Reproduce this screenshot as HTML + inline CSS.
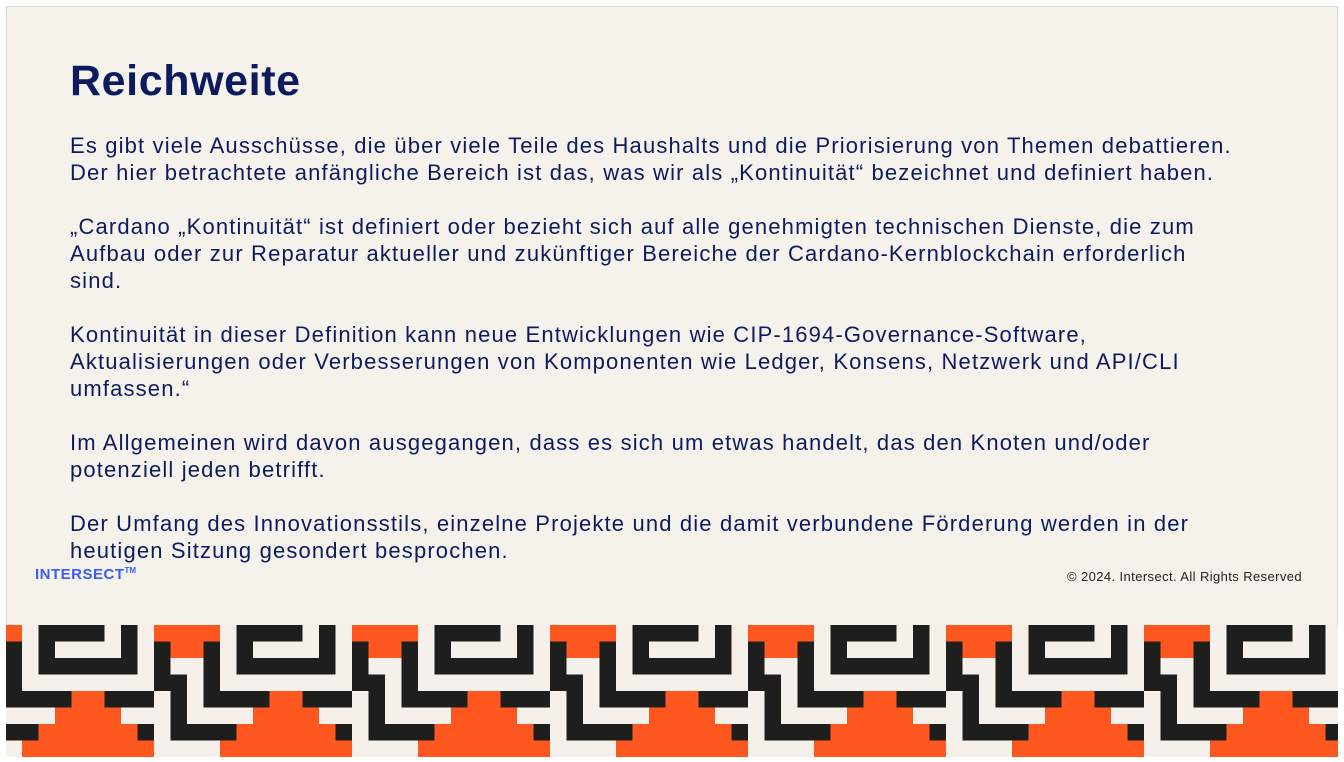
<!DOCTYPE html>
<html><head><meta charset="utf-8"><style>
body{margin:0;width:1344px;height:762px;background:#fff;position:relative;overflow:hidden;font-family:"Liberation Sans",sans-serif}
.slide{position:absolute;left:6px;top:6px;width:1332px;height:751px;background:#f5f2eb;border:1px solid #d8d8d8;box-sizing:border-box}
h1{position:absolute;left:70px;top:57px;margin:0;font-size:43px;font-weight:bold;color:#0d1b5e;letter-spacing:0.6px}
.body{position:absolute;left:70px;top:132px;width:1260px;font-size:22px;line-height:27px;color:#0d1b5e;letter-spacing:1.15px;white-space:nowrap}
.body p{margin:0 0 27px 0}
.logo{position:absolute;left:35px;top:566px;font-size:15px;font-weight:bold;letter-spacing:0.5px;color:#3b5cf5}
.copy{position:absolute;left:1067px;top:569px;font-size:13px;letter-spacing:0.4px;color:#222}
</style></head><body>
<div class="slide"></div>
<h1>Reichweite</h1>
<div class="body">
<p>Es gibt viele Ausschüsse, die über viele Teile des Haushalts und die Priorisierung von Themen debattieren.<br>Der hier betrachtete anfängliche Bereich ist das, was wir als „Kontinuität“ bezeichnet und definiert haben.</p>
<p>„Cardano „Kontinuität“ ist definiert oder bezieht sich auf alle genehmigten technischen Dienste, die zum<br>Aufbau oder zur Reparatur aktueller und zukünftiger Bereiche der Cardano-Kernblockchain erforderlich<br>sind.</p>
<p>Kontinuität in dieser Definition kann neue Entwicklungen wie CIP-1694-Governance-Software,<br>Aktualisierungen oder Verbesserungen von Komponenten wie Ledger, Konsens, Netzwerk und API/CLI<br>umfassen.“</p>
<p>Im Allgemeinen wird davon ausgegangen, dass es sich um etwas handelt, das den Knoten und/oder<br>potenziell jeden betrifft.</p>
<p>Der Umfang des Innovationsstils, einzelne Projekte und die damit verbundene Förderung werden in der<br>heutigen Sitzung gesondert besprochen.</p>
</div>
<div class="logo">INTERSECT<sup style="font-size:8px;letter-spacing:0">TM</sup></div>
<div class="copy">© 2024. Intersect. All Rights Reserved</div>
<svg style="position:absolute;left:6px;top:625px" width="1332" height="132" viewBox="6 0 1332 132">
<defs><pattern id="p" x="-44" y="0" width="198" height="132" patternUnits="userSpaceOnUse">
<rect width="198" height="132" fill="#f5f1ea"/>
<g fill="#fe5820">
<rect x="0" y="0" width="66" height="16.5"/>
<rect x="16.5" y="16.5" width="33" height="16.5"/>
<rect x="115.5" y="66" width="33" height="16.5"/>
<rect x="99" y="82.5" width="66" height="16.5"/>
<rect x="82.5" y="99" width="99" height="16.5"/>
<rect x="66" y="115.5" width="132" height="16.5"/>
</g>
<g fill="#1e1e1c">
<rect x="82.5" y="0" width="66" height="16.5"/><rect x="165" y="0" width="16.5" height="16.5"/>
<rect x="0" y="16.5" width="16.5" height="16.5"/><rect x="49.5" y="16.5" width="16.5" height="16.5"/><rect x="82.5" y="16.5" width="16.5" height="16.5"/><rect x="165" y="16.5" width="16.5" height="16.5"/>
<rect x="0" y="33" width="16.5" height="16.5"/><rect x="49.5" y="33" width="16.5" height="16.5"/><rect x="82.5" y="33" width="99" height="16.5"/>
<rect x="0" y="49.5" width="33" height="16.5"/><rect x="49.5" y="49.5" width="16.5" height="16.5"/>
<rect x="16.5" y="66" width="16.5" height="16.5"/><rect x="49.5" y="66" width="66" height="16.5"/><rect x="148.5" y="66" width="49.5" height="16.5"/>
<rect x="16.5" y="82.5" width="16.5" height="16.5"/>
<rect x="16.5" y="99" width="66" height="16.5"/><rect x="181.5" y="99" width="16.5" height="16.5"/>
</g></pattern></defs>
<rect x="6" y="0" width="1332" height="132" fill="url(#p)"/>
</svg>
</body></html>
